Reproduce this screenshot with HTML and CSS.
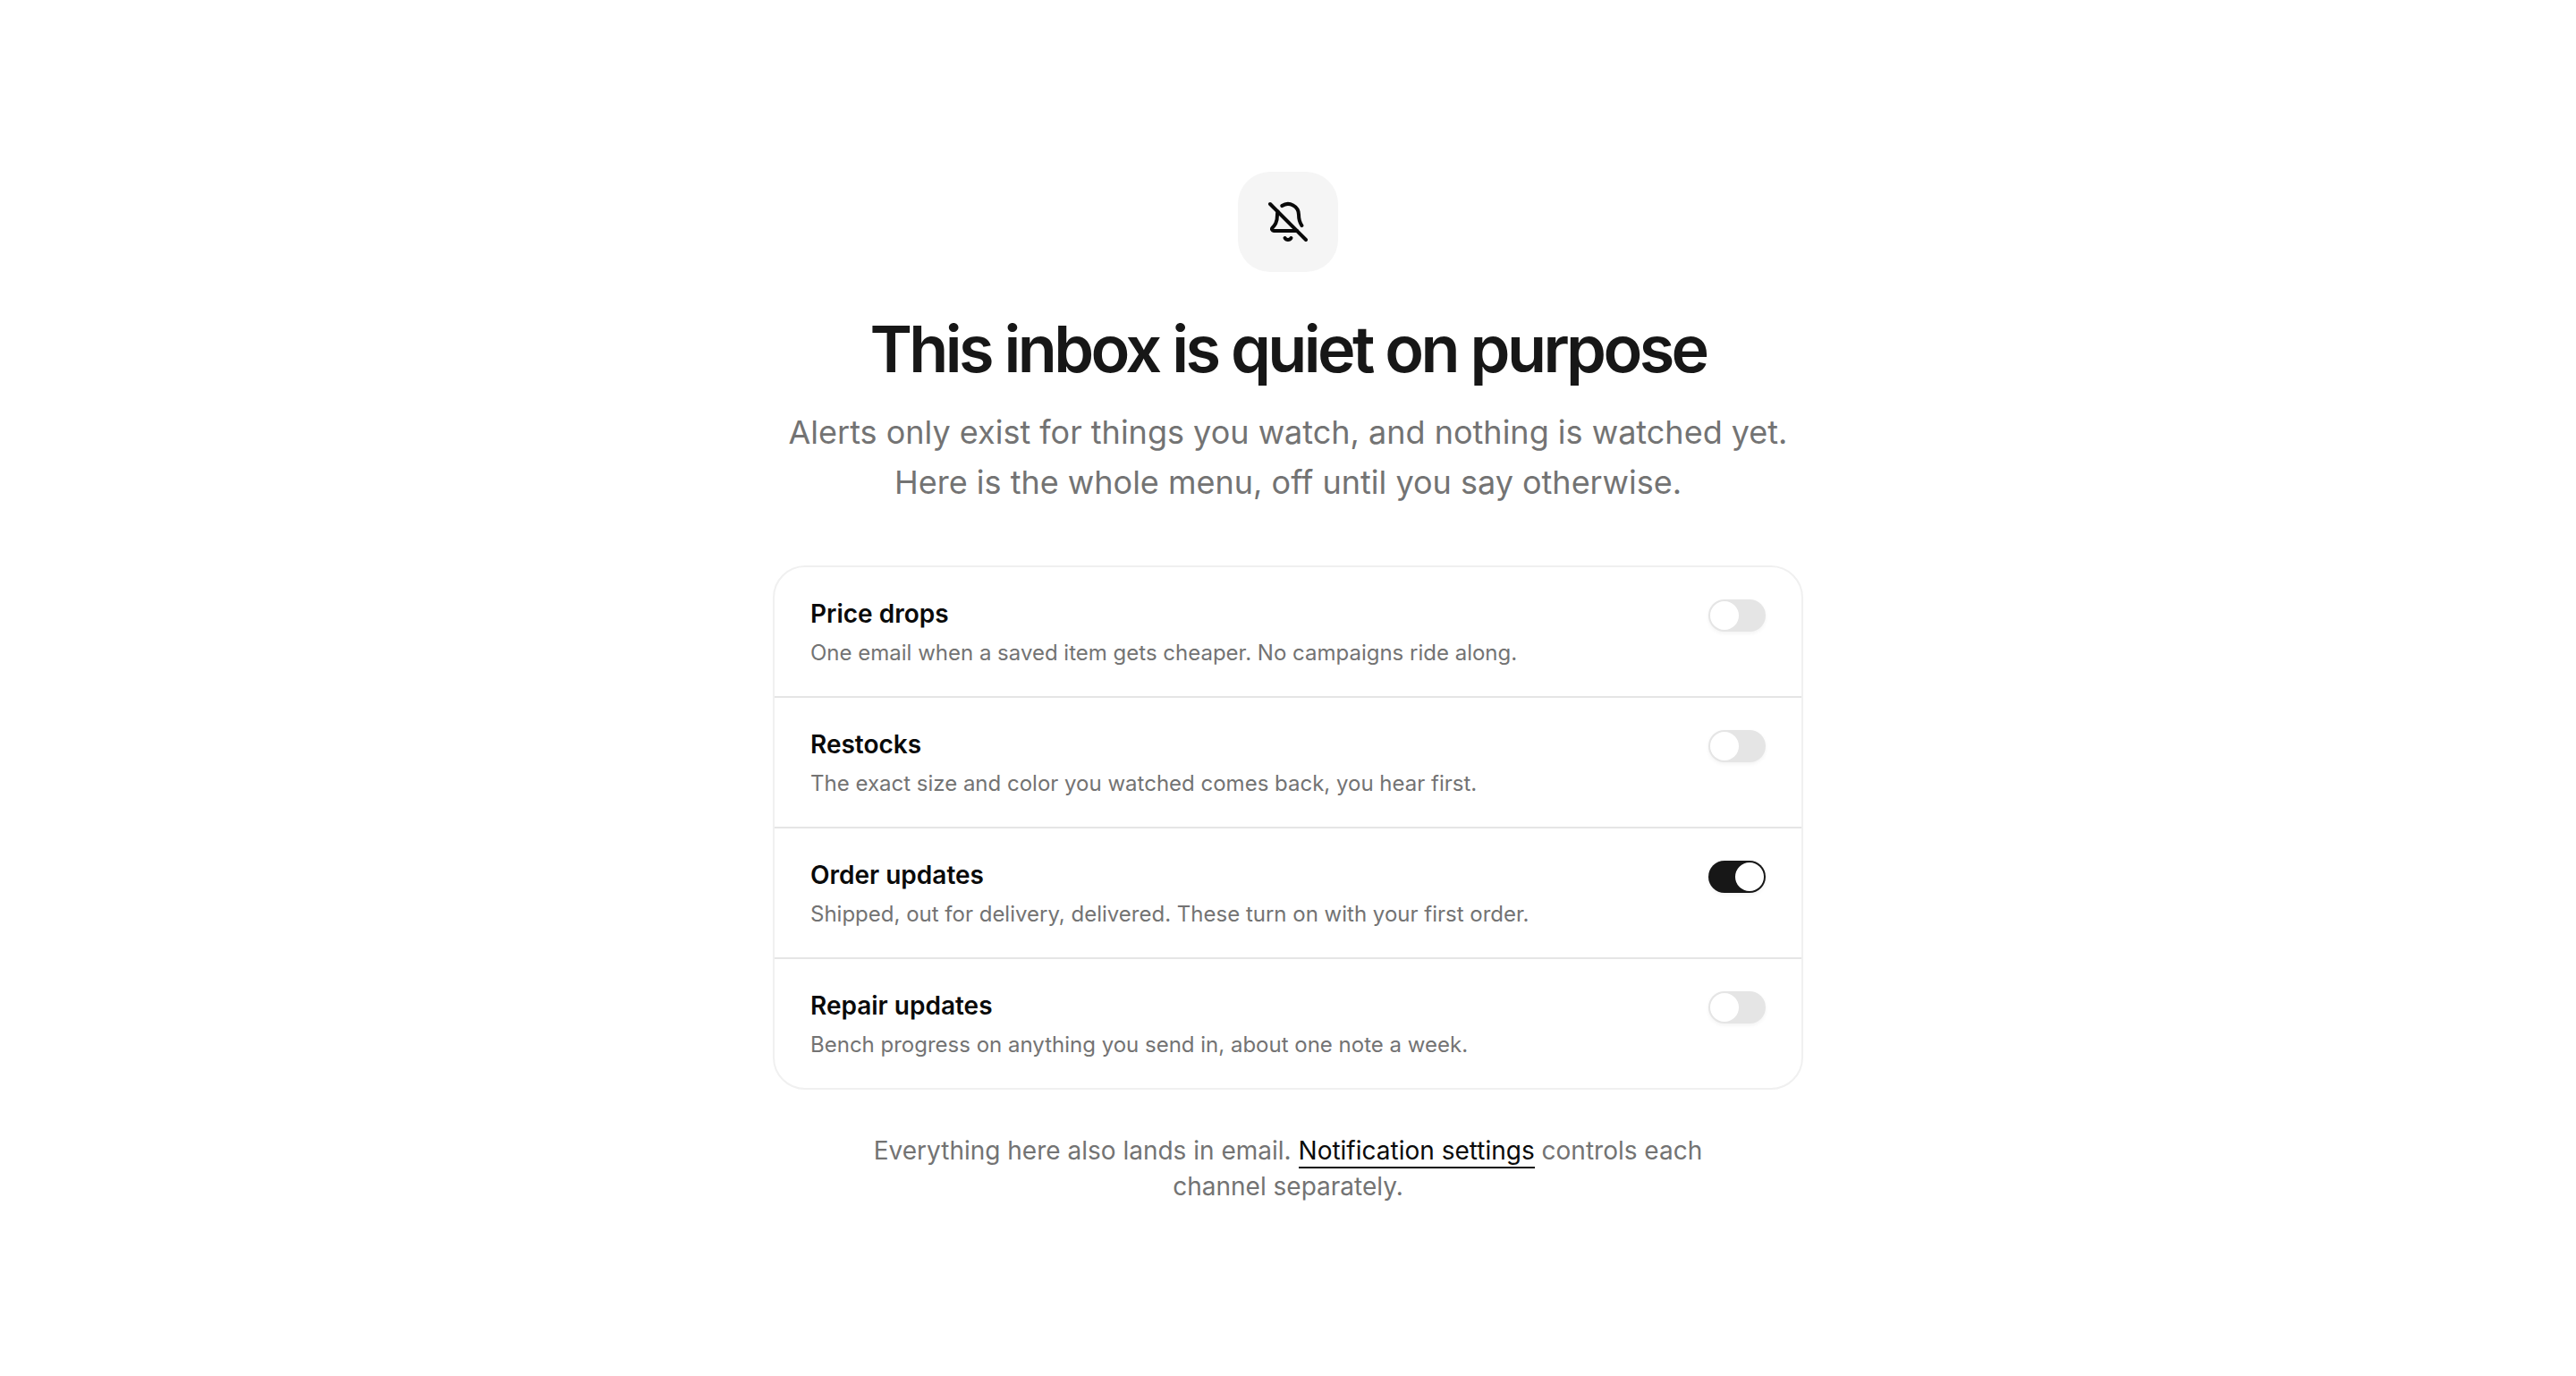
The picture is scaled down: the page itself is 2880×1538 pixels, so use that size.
FILE: index.html
```html
<!DOCTYPE html>
<html lang="en">
<head>
    <meta charset="utf-8">
    <title>Alerts</title>
    <link rel="stylesheet" href="styles.css">
</head>
<body>
    <main class="empty-state">
        <div class="icon-tile">
            <svg class="icon" viewBox="0 0 24 24" aria-hidden="true">
                <path d="M10.268 21a2 2 0 0 0 3.464 0"/>
                <path d="M17 17H4a1 1 0 0 1-.74-1.673C4.59 13.956 6 12.499 6 8a6 6 0 0 1 .258-1.742"/>
                <path d="m2 2 20 20"/>
                <path d="M8.668 3.01A6 6 0 0 1 18 8c0 2.687.77 4.653 1.707 6.05"/>
            </svg>
        </div>
        <h1>This inbox is quiet on purpose</h1>
        <p class="lead">Alerts only exist for things you watch, and nothing is watched yet. Here is the whole menu, off until you say otherwise.</p>

        <div class="alert-list">
            <div class="alert-row">
                <div class="alert-text">
                    <label class="alert-title" for="priceDrops">Price drops</label>
                    <p class="alert-description" id="priceDropsInfo">One email when a saved item gets cheaper. No campaigns ride along.</p>
                </div>
                <input type="checkbox" role="switch" class="switch" id="priceDrops" aria-describedby="priceDropsInfo">
            </div>
            <div class="alert-row">
                <div class="alert-text">
                    <label class="alert-title" for="restocks">Restocks</label>
                    <p class="alert-description" id="restocksInfo">The exact size and color you watched comes back, you hear first.</p>
                </div>
                <input type="checkbox" role="switch" class="switch" id="restocks" aria-describedby="restocksInfo">
            </div>
            <div class="alert-row">
                <div class="alert-text">
                    <label class="alert-title" for="orderUpdates">Order updates</label>
                    <p class="alert-description" id="orderUpdatesInfo">Shipped, out for delivery, delivered. These turn on with your first order.</p>
                </div>
                <input type="checkbox" role="switch" class="switch" id="orderUpdates" aria-describedby="orderUpdatesInfo" checked>
            </div>
            <div class="alert-row">
                <div class="alert-text">
                    <label class="alert-title" for="repairUpdates">Repair updates</label>
                    <p class="alert-description" id="repairUpdatesInfo">Bench progress on anything you send in, about one note a week.</p>
                </div>
                <input type="checkbox" role="switch" class="switch" id="repairUpdates" aria-describedby="repairUpdatesInfo">
            </div>
        </div>

        <p class="footnote">Everything here also lands in email. <a href="#settings">Notification settings</a> controls each channel separately.</p>
    </main>
</body>
</html>
```
FILE: styles.css
```css
* {
    box-sizing: border-box;
}

body {
    margin: 0;
    min-height: 100vh;
    display: flex;
    align-items: center;
    justify-content: center;
    background: #fff;
    color: #0a0a0a;
    font-family: Inter, "Liberation Sans", sans-serif;
    font-size: 28px;
    line-height: 40px;
}

h1,
p {
    margin: 0;
}

.empty-state {
    width: 100%;
    max-width: 1152px;
    display: flex;
    flex-direction: column;
    align-items: center;
    text-align: center;
}

.icon-tile {
    display: flex;
    padding: 32px;
    margin-bottom: 48px;
    border-radius: 36px;
    background: #f5f5f5;
}

.icon {
    width: 48px;
    height: 48px;
    fill: none;
    stroke: currentColor;
    stroke-width: 2;
    stroke-linecap: round;
    stroke-linejoin: round;
}

h1 {
    margin-bottom: 27px;
    color: #171717;
    font-size: 72px;
    font-weight: 600;
    line-height: 76px;
    letter-spacing: -0.05em;
}

.lead {
    margin-bottom: 65px;
    color: #737373;
    font-size: 36px;
    line-height: 56px;
}

/* Alert list */
.alert-list {
    width: 100%;
    border: 2px solid #f0f0f0;
    border-radius: 36px;
    text-align: left;
}

.alert-row {
    display: flex;
    justify-content: space-between;
    align-items: flex-start;
    gap: 32px;
    padding: 32px 40px 30px;
}

.alert-row + .alert-row {
    border-top: 2px solid #e5e5e5;
}

.alert-title {
    display: block;
    font-weight: 600;
}

.alert-description {
    margin-top: 6px;
    color: #737373;
    font-size: 24px;
    line-height: 36px;
}

/* Switch */
.switch {
    appearance: none;
    flex-shrink: 0;
    display: flex;
    width: 64px;
    height: 36px;
    margin: 4px 0 0;
    padding: 2px;
    border-radius: 18px;
    background: #e5e5e5;
    box-shadow: 0 2px 4px rgba(0,0,0,0.05);
    cursor: pointer;
}

.switch::before {
    content: "";
    width: 32px;
    height: 32px;
    border-radius: 50%;
    background: #fff;
}

.switch:checked {
    justify-content: flex-end;
    background: #171717;
}

.footnote {
    max-width: 960px;
    margin-top: 48px;
    color: #737373;
}

.footnote a {
    padding-bottom: 1px;
    color: #0a0a0a;
    text-decoration: none;
    border-bottom: 2px solid currentColor;
}
```
